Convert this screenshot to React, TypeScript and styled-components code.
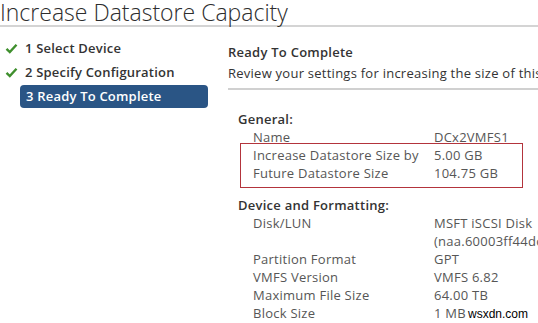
import React from 'react';
import styled, { createGlobalStyle } from 'styled-components';

const GlobalStyle = createGlobalStyle`
  html, body {
    margin: 0;
    padding: 0;
    background: #ffffff;
    overflow: hidden;
  }
  body {
    font-family: "Open Sans", "Liberation Sans", sans-serif;
    color: #565656;
  }
`;

const steps = [
  { label: '1 Select Device', done: true },
  { label: '2 Specify Configuration', done: true },
  { label: '3 Ready To Complete', done: false },
];

const general = [
  ['Name', 'DCx2VMFS1'],
  ['Increase Datastore Size by', '5.00 GB'],
  ['Future Datastore Size', '104.75 GB'],
];

const device = [
  ['Disk/LUN', 'MSFT iSCSI Disk'],
  ['', '(naa.60003ff44dc75adc8c3a20d6b2dc1b3f)'],
  ['Partition Format', 'GPT'],
  ['VMFS Version', 'VMFS 6.82'],
  ['Maximum File Size', '64.00 TB'],
  ['Block Size', '1 MB'],
];

const Check = () => (
  <svg width="13" height="11" viewBox="0 0 13 11">
    <path d="M1.5 5.8 L4.8 9 L11.5 1.8" fill="none" stroke="#3f8f2d" strokeWidth="2.4" />
  </svg>
);

const App = () => {
  return (
    <Page>
      <GlobalStyle />
      <Title>Increase Datastore Capacity</Title>
      <Body>
        <Nav>
          {steps.map((step) => (
            <Step key={step.label}>
              <CheckSlot>{step.done && <Check />}</CheckSlot>
              <StepLabel active={!step.done}>{step.label}</StepLabel>
            </Step>
          ))}
        </Nav>
        <Content>
          <Heading>Ready To Complete</Heading>
          <Description>Review your settings for increasing the size of this datastore.</Description>
          <Divider />
          <Section>
            <SectionTitle>General:</SectionTitle>
            <Row>
              <Key>{general[0][0]}</Key>
              <Value>{general[0][1]}</Value>
            </Row>
            <Highlight>
              {general.slice(1).map(([k, v]) => (
                <Row key={k}>
                  <Key>{k}</Key>
                  <Value>{v}</Value>
                </Row>
              ))}
            </Highlight>
          </Section>
          <Section last>
            <SectionTitle>Device and Formatting:</SectionTitle>
            {device.map(([k, v], i) => (
              <Row key={i}>
                <Key>{k}</Key>
                <Value>{v}</Value>
              </Row>
            ))}
          </Section>
        </Content>
      </Body>
      <Watermark>wsxdn.com</Watermark>
    </Page>
  );
};

export default App;

const Page = styled.div`
  position: relative;
  width: 538px;
  height: 323px;
  overflow: hidden;
`;

const Title = styled.div`
  height: 25px;
  border-bottom: 2px solid #d4d4d4;
  font-size: 23px;
  font-weight: 300;
  line-height: 24px;
  color: #2d2d2d;
  white-space: nowrap;
`;

const Body = styled.div`
  display: flex;
`;

const Nav = styled.div`
  width: 228px;
  flex-shrink: 0;
  padding-top: 9px;
  display: flex;
  flex-direction: column;
`;

const Step = styled.div`
  display: flex;
  align-items: center;
  height: 24px;
`;

const CheckSlot = styled.div`
  width: 20px;
  padding-left: 5px;
  display: flex;
  align-items: center;
`;

const StepLabel = styled.div<{ active: boolean }>`
  font-size: 13px;
  font-weight: 600;
  letter-spacing: 0.2px;
  white-space: nowrap;
  color: ${(p) => (p.active ? '#ffffff' : '#333333')};
  background: ${(p) => (p.active ? '#2a5585' : 'transparent')};
  border-radius: ${(p) => (p.active ? '4px' : '0')};
  height: 23px;
  line-height: 23px;
  padding-left: ${(p) => (p.active ? '6px' : '0')};
  margin-left: ${(p) => (p.active ? '-5px' : '0')};
  width: ${(p) => (p.active ? '182px' : 'auto')};
`;

const Content = styled.div`
  flex: 1;
  padding-top: 16px;
  white-space: nowrap;
  font-size: 13px;
  letter-spacing: 0.25px;
`;

const Heading = styled.div`
  font-weight: 600;
  color: #333333;
  line-height: 18px;
`;

const Description = styled.div`
  margin-top: 3px;
  line-height: 18px;
  color: #333333;
`;

const Divider = styled.div`
  margin-top: 6px;
  height: 2px;
  background: #d0d0d0;
`;

const Section = styled.div<{ last?: boolean }>`
  padding-left: 10px;
  margin-top: ${(p) => (p.last ? '8px' : '20px')};
`;

const SectionTitle = styled.div`
  font-weight: 600;
  color: #333333;
  line-height: 18px;
`;

const Row = styled.div`
  display: grid;
  grid-template-columns: 181px 1fr;
  padding-left: 15px;
  line-height: 18px;
`;

const Key = styled.div`
  color: #565656;
`;

const Value = styled.div`
  color: #565656;
`;

const Highlight = styled.div`
  margin-left: 2px;
  margin-top: -3px;
  width: 281px;
  border: 1px solid #b3343c;
  padding: 2px 0 5px;
  & > div {
    padding-left: 12px;
  }
`;

const Watermark = styled.div`
  position: absolute;
  left: 467px;
  top: 306px;
  background: #ffffff;
  padding: 0 3px 0 1px;
  font-family: "Liberation Sans", Arial, sans-serif;
  font-size: 12px;
  letter-spacing: 0;
  color: #000000;
  line-height: 16px;
`;
